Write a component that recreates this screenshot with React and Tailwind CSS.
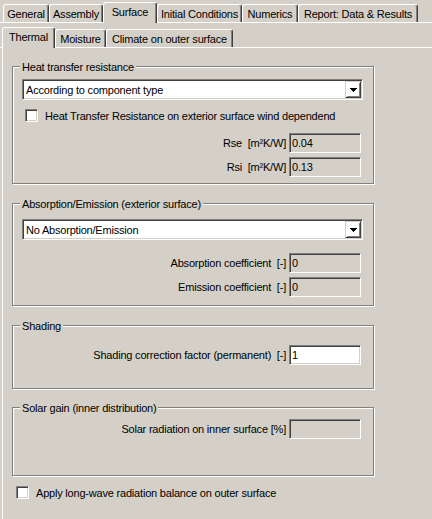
import React from "react";

const sunken =
  "border border-t-[#808080] border-l-[#808080] border-b-white border-r-white shadow-[inset_1px_1px_0_#404040,inset_-1px_-1px_0_#d4d0c8]";
const raised =
  "border border-t-[#d4d0c8] border-l-[#d4d0c8] border-b-[#404040] border-r-[#404040] shadow-[inset_1px_1px_0_#fff,inset_-1px_-1px_0_#808080]";
const etched = "border border-[#808080] shadow-[1px_1px_0_#fff,inset_1px_1px_0_#fff]";

function Tab({ label, className = "", active }) {
  return (
    <div
      className={`flex justify-center whitespace-nowrap rounded-t-[3px] border-l border-t border-r border-l-white border-t-white border-r-[#404040] shadow-[inset_-1px_0_0_#808080] bg-[#d4d0c8] pt-[2px] ${
        active ? "relative -mb-px h-[21px]" : "h-[18px]"
      } ${className}`}
    >
      {label}
    </div>
  );
}

function Group({ title, className = "", children }) {
  return (
    <div className={`relative w-[362px] ${etched} ${className}`}>
      <span className="absolute left-[7px] -top-[7px] bg-[#d4d0c8] px-[2px] whitespace-nowrap">
        {title}
      </span>
      {children}
    </div>
  );
}

function Combo({ value }) {
  return (
    <div className={`${sunken} flex h-[21px] w-[341px] items-center justify-between bg-white pl-[3px] pr-[1px]`}>
      <span className="whitespace-nowrap">{value}</span>
      <div className={`${raised} flex h-[17px] w-[16px] items-center justify-center`}>
        <svg width="7" height="4" viewBox="0 0 7 4" shapeRendering="crispEdges">
          <path d="M0 0h7v1H0zM1 1h5v1H1zM2 2h3v1H2zM3 3h1v1H3z" fill="#000" />
        </svg>
      </div>
    </div>
  );
}

function Field({ label, value, white, className = "" }) {
  return (
    <div className={`flex items-center justify-end pr-[2px] ${className}`}>
      <span className="mr-[3px] whitespace-pre">{label}</span>
      <div
        className={`${sunken} flex h-[20px] w-[72px] items-center pl-[2px] ${
          white ? "bg-white" : "bg-[#d4d0c8]"
        }`}
      >
        {value}
      </div>
    </div>
  );
}

function CheckBox() {
  return <div className={`${sunken} h-[13px] w-[13px] shrink-0 bg-white`} />;
}

export default function App() {
  return (
    <div className="flex h-[519px] w-[432px] flex-col overflow-hidden bg-[#d4d0c8] font-['Liberation_Sans',Arial,sans-serif] text-[11px] leading-[14px] tracking-[-0.2px] text-black">
      {/* outer tabs */}
      <div className="flex h-[23px] shrink-0 items-end border-b border-white pl-[3px]">
        <Tab label="General" className="w-[46px]" />
        <Tab label="Assembly" className="w-[54px]" />
        <Tab label="Surface" className="w-[54px]" active />
        <Tab label="Initial Conditions" className="w-[85px]" />
        <Tab label="Numerics" className="w-[56px]" />
        <Tab label="Report: Data & Results" className="w-[120px]" />
      </div>

      {/* inner tabs */}
      <div className="flex h-[25px] shrink-0 items-end border-b border-white pl-[2px]">
        <Tab label="Thermal" className="w-[53px]" active />
        <Tab label="Moisture" className="w-[51px]" />
        <Tab label="Climate on outer surface" className="w-[127px]" />
      </div>

      <div className="ml-[2px] flex flex-1 flex-col border-l border-white pl-[9px]">
        <Group title="Heat transfer resistance" className="mt-[18px] pt-[12px] pl-[9px] pr-[10px] pb-[6px]">
          <Combo value="According to component type" />
          <div className="mt-[9px] flex h-[13px] items-center">
            <div className="ml-[3px]">
              <CheckBox />
            </div>
            <span className="ml-[7px] whitespace-nowrap">
              Heat Transfer Resistance on exterior surface wind dependend
            </span>
          </div>
          <Field label="Rse  [m²K/W]" value="0.04" className="mt-[11px]" />
          <Field label="Rsi  [m²K/W]" value="0.13" className="mt-[4px]" />
        </Group>

        <Group title="Absorption/Emission (exterior surface)" className="mt-[19px] pt-[15px] pl-[9px] pr-[10px] pb-[8px]">
          <Combo value="No Absorption/Emission" />
          <Field label="Absorption coefficient  [-]" value="0" className="mt-[13px]" />
          <Field label="Emission coefficient  [-]" value="0" className="mt-[4px]" />
        </Group>

        <Group title="Shading" className="mt-[19px] pt-[19px] pl-[9px] pr-[10px] pb-[23px]">
          <Field label="Shading correction factor (permanent)  [-]" value="1" white />
        </Group>

        <Group title="Solar gain (inner distribution)" className="mt-[18px] pt-[11px] pl-[9px] pr-[10px] pb-[36px]">
          <Field label="Solar radiation on inner surface [%]" value="" />
        </Group>

        <div className="mt-[10px] flex h-[13px] items-center pl-[4px]">
          <CheckBox />
          <span className="ml-[7px] whitespace-nowrap">
            Apply long-wave radiation balance on outer surface
          </span>
        </div>
      </div>
    </div>
  );
}
